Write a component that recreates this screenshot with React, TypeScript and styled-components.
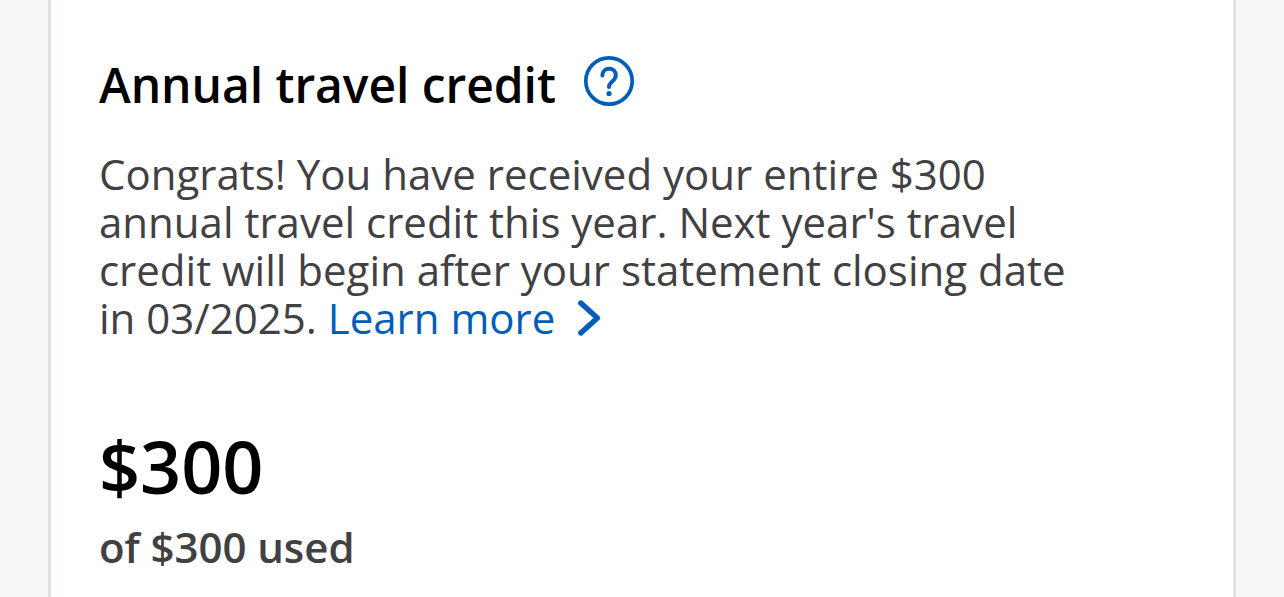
import React from "react";
import styled, { createGlobalStyle } from "styled-components";

const GlobalStyle = createGlobalStyle`
  * {
    box-sizing: border-box;
  }

  body {
    margin: 0;
    background: #f5f6f8;
    font-family: "Open Sans", sans-serif;
    overflow: hidden;
  }
`;

const Page = styled.main`
  height: 100vh;
  padding: 0 48px;
`;

const Card = styled.section`
  height: 100%;
  padding: 48px 48px 0;
  background: #ffffff;
  border: solid #e0e2e4;
  border-width: 0 3px;
`;

const Header = styled.header`
  display: flex;
  align-items: center;
  gap: 27px;
  height: 66px;
`;

const Title = styled.h2`
  margin: 8px 0 0;
  color: #000000;
  font-size: 48px;
  font-weight: 600;
  line-height: 66px;
  letter-spacing: -0.06px;
  white-space: nowrap;
`;

const HelpButton = styled.button`
  display: flex;
  padding: 0;
  background: none;
  border: none;
  color: #005eb8;
  cursor: pointer;
`;

const Message = styled.p`
  width: 980px;
  margin: 36px 0 0;
  color: #414042;
  font-size: 42px;
  line-height: 48px;
`;

const LearnMore = styled.a`
  display: inline-flex;
  align-items: center;
  gap: 21px;
  color: #005eb8;
  text-decoration: none;
  white-space: nowrap;
`;

const Amount = styled.div`
  margin-top: 75px;
  color: #000000;
  font-size: 72px;
  font-weight: 600;
  line-height: 98px;
  letter-spacing: -0.1px;
`;

const Used = styled.div`
  margin-top: 3px;
  color: #414042;
  font-size: 42px;
  font-weight: 600;
  line-height: 58px;
  letter-spacing: -0.06px;
`;

const HelpIcon = () => (
  <svg width="52" height="52" viewBox="0 0 52 52" fill="none" stroke="currentColor">
    <circle cx="26" cy="26" r="23.2" strokeWidth="3.7" />
    <path
      d="M19.4 20.4c0-4 2.9-6.6 6.7-6.6s6.7 2.6 6.7 6.4c0 2.9-1.5 4.6-3.6 6.4-2.1 1.8-3.2 3.1-3.2 5.3"
      strokeWidth="4"
      strokeLinecap="round"
    />
    <circle cx="26" cy="38.5" r="2.6" fill="currentColor" stroke="none" />
  </svg>
);

const ChevronIcon = () => (
  <svg width="26" height="36" viewBox="0 0 26 36" fill="none" stroke="currentColor">
    <path d="M4.8 3l16.6 15L4.8 33" strokeWidth="5.4" strokeLinecap="round" strokeLinejoin="round" />
  </svg>
);

const App: React.FC = () => {
  return (
    <Page>
      <GlobalStyle />
      <Card>
        <Header>
          <Title>Annual travel credit</Title>
          <HelpButton aria-label="Help">
            <HelpIcon />
          </HelpButton>
        </Header>
        <Message>
          Congrats! You have received your entire $300 annual travel credit this year. Next year's travel
          credit will begin after your statement closing date in 03/2025.{" "}
          <LearnMore href="#">
            Learn more
            <ChevronIcon />
          </LearnMore>
        </Message>
        <Amount>$300</Amount>
        <Used>of $300 used</Used>
      </Card>
    </Page>
  );
};

export default App;
